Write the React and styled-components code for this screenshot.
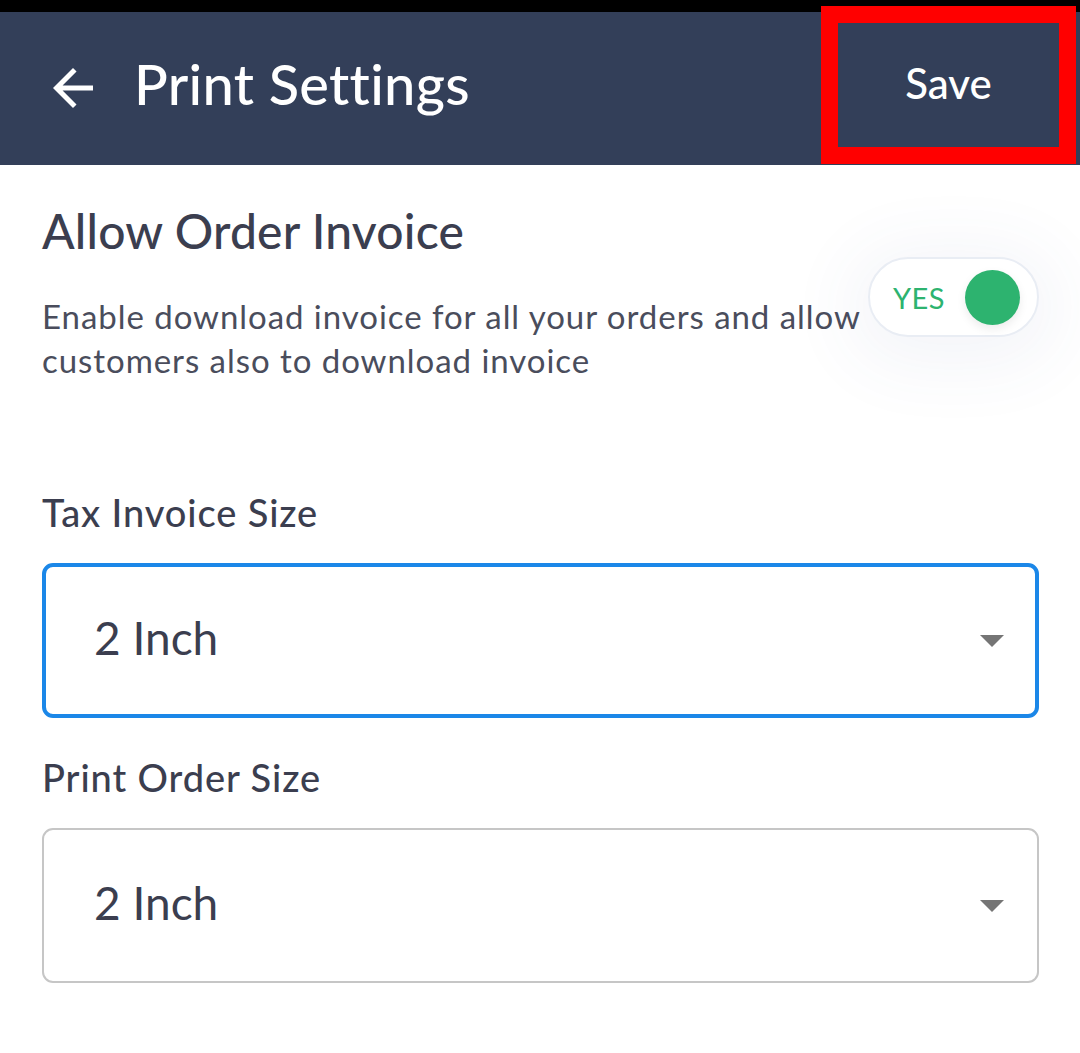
import React, { useState } from "react";
import styled, { createGlobalStyle } from "styled-components";
import { MdArrowBack } from "react-icons/md";

const GlobalStyle = createGlobalStyle`
  * { box-sizing: border-box; }
  body {
    margin: 0;
    background: #ffffff;
    font-family: Lato, "Noto Sans", sans-serif;
    color: #3b3e4f;
  }
`;

const sizes = ["2 Inch", "3 Inch", "A4"];

const App = () => {
  const [allowInvoice, setAllowInvoice] = useState(true);

  return (
    <Page>
      <GlobalStyle />
      <StatusBar />
      <Header>
        <BackButton aria-label="Back">
          <MdArrowBack size={60} />
        </BackButton>
        <Title>Print Settings</Title>
        <SaveButton>Save</SaveButton>
      </Header>

      <Content>
        <Heading>Allow Order Invoice</Heading>
        <OptionRow>
          <Description>
            Enable download invoice for all your orders and allow
            <br />
            customers also to download invoice
          </Description>
          <Toggle onClick={() => setAllowInvoice(!allowInvoice)}>
            <ToggleLabel>{allowInvoice ? "YES" : "NO"}</ToggleLabel>
            <Knob $on={allowInvoice} />
          </Toggle>
        </OptionRow>

        <Fields>
          <Field>
            <Label>Tax Invoice Size</Label>
            <Select $focused>
              <SelectValue>{sizes[0]}</SelectValue>
              <Caret />
            </Select>
          </Field>
          <Field>
            <Label>Print Order Size</Label>
            <Select>
              <SelectValue>{sizes[0]}</SelectValue>
              <Caret />
            </Select>
          </Field>
        </Fields>
      </Content>
    </Page>
  );
};

export default App;

const Page = styled.div`
  width: 1080px;
  min-height: 1053px;
  background: #ffffff;
`;

const StatusBar = styled.div`
  height: 12px;
  background: #000000;
`;

const Header = styled.header`
  height: 153px;
  background: #333f59;
  display: flex;
  align-items: center;
  padding: 0 21px 7px 43px;
`;

const BackButton = styled.button`
  border: none;
  background: none;
  padding: 0;
  margin-top: 6px;
  color: #ffffff;
  display: flex;
  cursor: pointer;
`;

const Title = styled.h1`
  flex: 1;
  margin: 0 0 4px 31px;
  font-size: 56px;
  font-weight: 500;
  color: #ffffff;
  letter-spacing: 0.3px;
`;

const SaveButton = styled.button`
  width: 221px;
  height: 124px;
  border: none;
  padding: 0 0 4px;
  background: #333f59;
  color: #ffffff;
  font-family: Lato, "Noto Sans", sans-serif;
  font-size: 42px;
  font-weight: 500;
  outline: 17px solid #ff0000;
  cursor: pointer;
`;

const Content = styled.main`
  padding: 40px 41px 0 42px;
`;

const Heading = styled.h2`
  margin: 0;
  font-size: 48px;
  line-height: 52px;
  font-weight: 500;
  color: #3b3e4f;
  letter-spacing: 0.2px;
`;

const OptionRow = styled.div`
  display: flex;
  align-items: flex-start;
`;

const Description = styled.p`
  flex: 1;
  margin: 37px 0 0;
  font-size: 33px;
  line-height: 44px;
  color: #4a4d5c;
  letter-spacing: 0.95px;
`;

const Toggle = styled.div`
  width: 171px;
  height: 80px;
  border-radius: 40px;
  border: 2px solid #e9edf4;
  background: #ffffff;
  display: flex;
  align-items: center;
  justify-content: space-between;
  padding: 0 17px 0 23px;
  box-shadow: 0 10px 70px 20px rgba(70, 90, 150, 0.06);
  cursor: pointer;
`;

const ToggleLabel = styled.span`
  font-size: 29px;
  color: #2db36f;
  letter-spacing: 0.5px;
`;

const Knob = styled.span`
  width: 55px;
  height: 55px;
  border-radius: 50%;
  background: ${(p) => (p.$on ? "#2db36f" : "#c8ccd4")};
  box-shadow: 0 4px 10px rgba(0, 0, 0, 0.08);
`;

const Fields = styled.div`
  margin-top: 108px;
  display: flex;
  flex-direction: column;
  gap: 37px;
`;

const Field = styled.div`
  display: flex;
  flex-direction: column;
`;

const Label = styled.label`
  font-size: 38px;
  line-height: 44px;
  font-weight: 500;
  color: #3b3e4f;
  margin-bottom: 29px;
  letter-spacing: 0.9px;
`;

const Select = styled.div`
  height: 155px;
  border-radius: 11px;
  border: ${(p) => (p.$focused ? "4px solid #1b87e8" : "2px solid #c6c6c6")};
  display: flex;
  align-items: center;
  padding: 0 31px 6px ${(p) => (p.$focused ? "48px" : "50px")};
  padding-right: ${(p) => (p.$focused ? "31px" : "33px")};
`;

const SelectValue = styled.span`
  flex: 1;
  font-size: 46px;
  color: #3b3e4f;
`;

const Caret = styled.span`
  width: 0;
  height: 0;
  border-left: 12px solid transparent;
  border-right: 12px solid transparent;
  border-top: 12px solid #757575;
  margin-top: 6px;
`;
